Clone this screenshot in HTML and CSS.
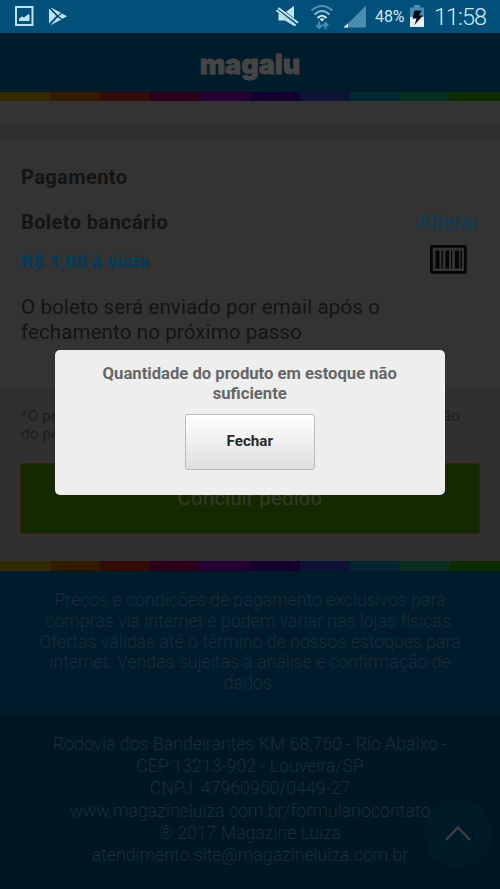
FILE: index.html
```html
<!DOCTYPE html>
<html lang="pt-BR">
<head>
<meta charset="utf-8">
<title>Magalu</title>
<link rel="stylesheet" href="styles.css">
</head>
<body>
<div class="screen">
  <div class="status">
    <svg class="ic-image" width="20" height="22" viewBox="0 0 20 22"><path fill="none" stroke="#bfe0f6" stroke-width="2" d="M2 2h16.500v18H2z"/><path fill="#bfe0f6" d="M5 16v-2.500l3-2 2 1 4.500-3.500 1 1v6z"/></svg>
    <svg class="ic-play" width="20" height="22" viewBox="0 0 20 22"><path fill="#bfe0f6" d="M1 2.500v15L8.300 10zM2.400 1.200l10.600 5.600-3.200 2.500zM2.400 19.300l7.300-8 3.300 2.400zM10.800 10l3.300-2.500 4.900 2.700-4.900 2.800z"/></svg>
    <span class="gap"></span>
    <svg class="ic-mute" width="24" height="24" viewBox="0 0 24 24"><path fill="#c5e3f5" d="M2.500 7.500h6.500l9-6.500v20L9 15.500H2.500z"/><path stroke="#00507a" stroke-width="5.500" d="M1 3.500l21 16"/><path stroke="#c5e3f5" stroke-width="2" d="M.5 5.200l19.200 15.300M2.300 3l19.700 14.800"/></svg>
    <svg class="ic-wifi" width="24" height="26" viewBox="0 0 24 26"><g fill="none" stroke-width="2"><path stroke="#5294b9" d="M1.500 7.500Q12-1.500 22.500 7.500"/><path stroke="#8dbbd5" d="M4.500 11.500Q12 4.500 19.500 11.500"/><path stroke="#d3e9f5" d="M7.500 15Q12 10.500 16.500 15"/></g><path fill="#e0f1fa" d="M9.500 16q2.500-1.700 5 0L12 18.500z"/><path stroke="#4b8db2" stroke-width="2" fill="none" d="M9.200 18.500v7M6.500 22l2.700 3 2.700-3M15.500 26v-6.500M12.800 23l2.700-3 2.700 3"/></svg>
    <svg class="ic-signal" width="24" height="24" viewBox="0 0 24 24"><path fill="#4b8db2" d="M1 22.500L23 .5v22z"/><path fill="#e4f3fb" d="M.5 22.500L5 18.200v4.300z"/></svg>
    <span class="pct">48%</span>
    <svg class="ic-batt" width="14" height="23" viewBox="0 0 14 23"><path fill="#4b8db2" d="M4 0h6v2.500h4V13H0V2.500h4z"/><path fill="#e4f3fb" d="M0 12h14v10H0z"/><path fill="#050b10" d="M4.500 5.500h7L9 10.500h4L4.500 20 6.500 13.500H2.500z"/></svg>
    <span class="clock">11:58</span>
  </div>
  <header class="brand">magalu</header>
  <div class="rainbow"><i></i><i></i><i></i><i></i><i></i><i></i><i></i><i></i><i></i><i></i></div>
  <main>
    <section class="payment">
      <h2>Pagamento</h2>
      <div class="row method"><h2>Boleto bancário</h2><a>Alterar</a></div>
      <div class="row price"><strong>R$ 1,00 à vista</strong>
        <svg width="37" height="29" viewBox="0 0 37 29"><rect x="1.400" y="1.400" width="34" height="26" rx="1.500" fill="none" stroke="#050505" stroke-width="2.700"/><path fill="#050505" d="M5.500 5.500h4v18h-4zM11.500 5.500H13v18h-1.500zM15.500 5.500H19v18h-3.500zM21 5.500h1v18h-1zM25 5.500h4v18h-4zM30.500 5.500h1.500v18h-1.500z"/></svg>
      </div>
      <p>O boleto será enviado por email após o<br>fechamento no próximo passo</p>
    </section>
    <section class="confirm">
      <div class="note"><span>*O prazo de entrega começa a contar a partir</span><span>da aprovação</span></div>
      <div class="note">do pedido.</div>
      <button class="finish">Concluir pedido</button>
    </section>
  </main>
  <div class="rainbow lower"><i></i><i></i><i></i><i></i><i></i><i></i><i></i><i></i><i></i><i></i></div>
  <footer>
    <div class="terms"><span>Preços e condições de pagamento exclusivos para</span><span>compras via internet e podem variar nas lojas físicas.</span><span>Ofertas válidas até o término de nossos estoques para</span><span>internet. Vendas sujeitas à análise e confirmação de</span><span>dados.</span></div>
    <div class="address"><span>Rodovia dos Bandeirantes KM 68,760 - Rio Abaixo -</span><span>CEP:13213-902 - Louveira/SP</span><span>CNPJ: 47960950/0449-27</span><span>www.magazineluiza.com.br/formulariocontato</span><span>® 2017 Magazine Luiza</span><span>atendimento.site@magazineluiza.com.br</span></div>
  </footer>
  <div class="top"><svg width="28" height="18" viewBox="0 0 28 18"><path d="M2 16L14 3.500 26 16" fill="none" stroke="#3b3e40" stroke-width="2.400"/></svg></div>
  <div class="dialog">
    <div class="message">Quantidade do produto em estoque não<br>suficiente</div>
    <button class="close">Fechar</button>
  </div>
</div>
</body>
</html>
```
FILE: styles.css
```css
* { box-sizing: border-box; }
body { margin: 0; font-family: Roboto, "Liberation Sans", sans-serif; background: #333; }
.screen { position: relative; width: 500px; height: 889px; overflow: hidden; white-space: nowrap; }
.status { height: 33px; background: #00507a; display: flex; align-items: flex-start; color: #d0e8f5; padding: 5px 0 0 14px; }
.status svg { flex: none; }
.ic-play { margin: 1px 0 0 14px; }
.gap { width: 208px; flex: none; }
.ic-mute { margin-right: 10px; }
.ic-wifi { margin: -2px 9px 0 0; }
.ic-signal { margin-right: 8px; }
.pct { width: 32px; font-size: 16px; line-height: 24px; letter-spacing: -.1px; }
.ic-batt { margin-left: 3px; }
.clock { margin-left: 10px; font-size: 23.500px; font-weight: 300; line-height: 25px; letter-spacing: -1px; }
.brand { height: 59px; background: #001b29; color: #454545; text-align: center; font: 900 27px/64px Inter, sans-serif; letter-spacing: 0; -webkit-text-stroke: .8px #454545; }
.rainbow { display: flex; height: 9px; }
.rainbow.lower { height: 10px; }
.rainbow i { flex: 1; background: #332b00; }
.rainbow i:nth-child(2) { background: #331b00; }
.rainbow i:nth-child(3) { background: #330c07; }
.rainbow i:nth-child(4) { background: #2b001c; }
.rainbow i:nth-child(5) { background: #240033; }
.rainbow i:nth-child(6) { background: #130030; }
.rainbow i:nth-child(7) { background: #0d1236; }
.rainbow i:nth-child(8) { background: #04272f; }
.rainbow i:nth-child(9) { background: #082e20; }
.rainbow i:nth-child(10) { background: #0d2b00; }
main { height: 460px; padding-top: 22px; background: #333; }
.payment { height: 264px; padding: 0 21px; border-top: 17px solid #303030; color: #141414; }
.payment h2 { margin: 0; font-size: 20px; line-height: 24px; font-weight: 700; letter-spacing: .4px; }
.payment > h2 { padding-top: 25px; }
.row { display: flex; justify-content: space-between; }
.method { margin-top: 21px; }
.method a { color: #083d5a; font-size: 20.500px; line-height: 24px; letter-spacing: .1px; }
.price { margin-top: 11px; height: 29px; color: #003d5c; }
.price strong { font-size: 19px; line-height: 33px; letter-spacing: .15px; }
.price svg { margin-right: 12px; }
.payment p { margin: 21px 0 0; font-size: 20.500px; line-height: 25px; letter-spacing: .12px; }
.confirm { background: #303030; height: 174px; padding: 20px 20px 0; }
.note { display: flex; justify-content: space-between; font-size: 15.500px; line-height: 18px; color: #1e1e1e; padding-left: 1px; padding-right: 20px; }
.finish { display: block; width: 460px; height: 71px; margin-top: 20px; padding: 0; border: 1px solid #332209; border-radius: 3px; background: #152900; color: #333b2b; font: 20.500px/69px Roboto, sans-serif; letter-spacing: .15px; }
footer { color: #1a2d38; font-size: 17.700px; font-weight: 300; text-align: center; }
footer span { display: block; }
.terms { height: 143px; padding-top: 19px; background: #001b29; line-height: 20.800px; }
.address { height: 176px; padding-top: 19px; background: #001623; line-height: 22.200px; }
.top { position: absolute; left: 424px; top: 798px; width: 68px; height: 70px; border-radius: 50%; background: #001a27; display: flex; align-items: center; justify-content: center; }
.dialog { position: absolute; left: 55px; top: 350px; width: 389.500px; height: 144.500px; border-radius: 5px; background: #eee; text-align: center; padding-top: 14px; }
.message { color: #666; font-size: 16.650px; line-height: 19.500px; font-weight: 700; }
.close { display: block; width: 130px; height: 55.500px; margin: 11px auto 0; border: 1px solid #bbb; border-radius: 3px; background: linear-gradient(#fff, #dfdfdf); color: #2b2b2b; font: 700 15.200px Roboto, sans-serif; padding: 0 0 2px; }
```
